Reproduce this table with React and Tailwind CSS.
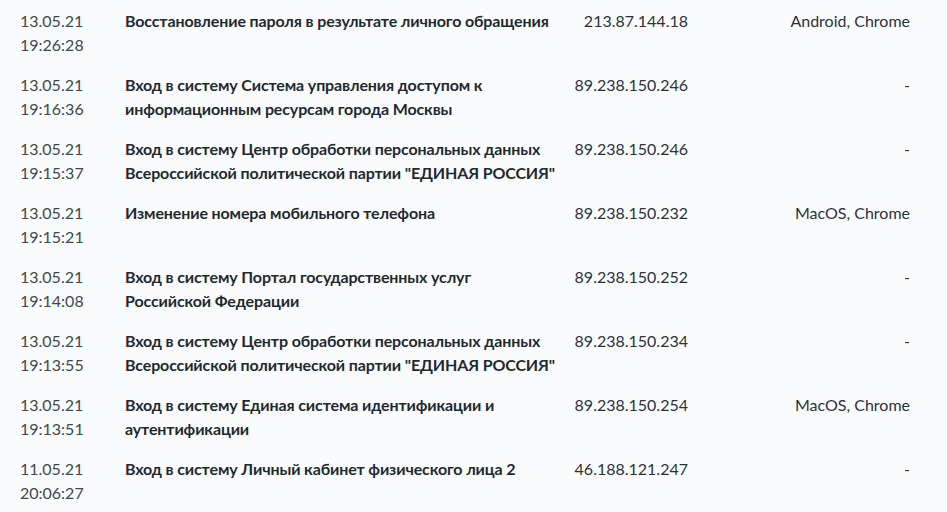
const rows = [
  ['13.05.21', '19:26:28', 'Восстановление пароля в результате личного обращения', '213.87.144.18', 'Android, Chrome'],
  ['13.05.21', '19:16:36', 'Вход в систему Система управления доступом к информационным ресурсам города Москвы', '89.238.150.246', '-'],
  ['13.05.21', '19:15:37', 'Вход в систему Центр обработки персональных данных Всероссийской политической партии "ЕДИНАЯ РОССИЯ"', '89.238.150.246', '-'],
  ['13.05.21', '19:15:21', 'Изменение номера мобильного телефона', '89.238.150.232', 'MacOS, Chrome'],
  ['13.05.21', '19:14:08', 'Вход в систему Портал государственных услуг Российской Федерации', '89.238.150.252', '-'],
  ['13.05.21', '19:13:55', 'Вход в систему Центр обработки персональных данных Всероссийской политической партии "ЕДИНАЯ РОССИЯ"', '89.238.150.234', '-'],
  ['13.05.21', '19:13:51', 'Вход в систему Единая система идентификации и аутентификации', '89.238.150.254', 'MacOS, Chrome'],
  ['11.05.21', '20:06:27', 'Вход в систему Личный кабинет физического лица 2', '46.188.121.247', '-'],
];

export default function App() {
  return (
    <div className="min-h-screen bg-[#f9fbfd] pt-px font-['Lato',sans-serif] text-[16px] leading-6 text-[#2b3338]">
      {rows.map(([date, time, event, ip, device], i) => (
        <div key={i} className="grid grid-cols-[105px_432px_131px_222px] pl-5 py-2">
          <div className="text-[#3d4a50]">
            <div>{date}</div>
            <div>{time}</div>
          </div>
          <div className="font-bold tracking-[-0.13px] text-[#1f2a30]">{event}</div>
          <div className="text-right">{ip}</div>
          <div className="text-right">{device}</div>
        </div>
      ))}
    </div>
  );
}
